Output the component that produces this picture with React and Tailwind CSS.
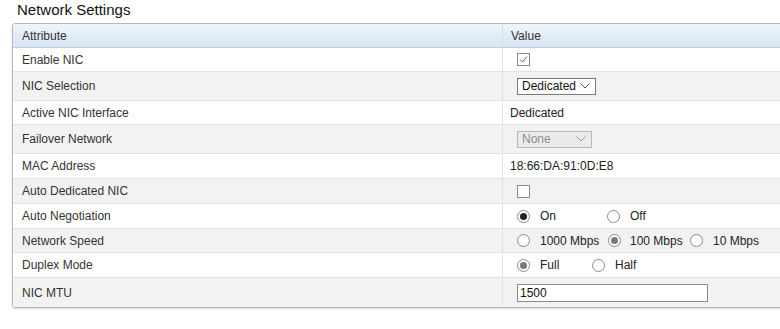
import React from "react";

function Radio({ checked, dim }) {
  return (
    <span className="inline-flex items-center justify-center w-[13px] h-[13px] rounded-full border border-[#8a8a8a] bg-white shrink-0">
      {checked && <span className={"w-[7px] h-[7px] rounded-full " + (dim ? "bg-[#7a7a7a]" : "bg-[#222]")} />}
    </span>
  );
}

function Check({ checked }) {
  return (
    <span className="inline-flex items-center justify-center w-[13px] h-[13px] border border-[#8a8a8a] bg-white">
      {checked && (
        <svg width="9" height="9" viewBox="0 0 9 9" fill="none">
          <path d="M1 4.5 L3.5 7 L8 1.5" stroke="#666" strokeWidth="1" />
        </svg>
      )}
    </span>
  );
}

function Select({ label, disabled, w }) {
  return (
    <span
      className={
        "inline-flex items-center justify-between h-[17px] border pl-[4px] pr-[5px] " +
        w +
        (disabled ? " bg-[#ebebeb] border-[#b8b8b8] text-[#8d8d8d]" : " bg-white border-[#7a7a7a] text-[#111]")
      }
    >
      <span className="text-[12px]">{label}</span>
      <svg width="10" height="6" viewBox="0 0 10 6" fill="none">
        <path d="M0.5 0.5 L5 5 L9.5 0.5" stroke={disabled ? "#9a9a9a" : "#555"} strokeWidth="1" />
      </svg>
    </span>
  );
}

const rows = [
  { name: "Enable NIC", h: "h-[24px]", value: <Check checked /> },
  { name: "NIC Selection", h: "h-[29px]", value: <Select label="Dedicated" w="w-[79px]" /> },
  { name: "Active NIC Interface", h: "h-[24px]", value: <span className="-ml-[7px]">Dedicated</span> },
  { name: "Failover Network", h: "h-[29px]", value: <Select label="None" w="w-[75px]" disabled /> },
  { name: "MAC Address", h: "h-[25px]", value: <span className="-ml-[7px]">18:66:DA:91:0D:E8</span> },
  { name: "Auto Dedicated NIC", h: "h-[25px]", value: <Check /> },
  {
    name: "Auto Negotiation",
    h: "h-[25px]",
    value: (
      <span className="flex items-center">
        <Radio checked />
        <span className="ml-[10px] w-[67px]">On</span>
        <Radio />
        <span className="ml-[10px]">Off</span>
      </span>
    ),
  },
  {
    name: "Network Speed",
    h: "h-[24px]",
    value: (
      <span className="flex items-center">
        <Radio />
        <span className="ml-[10px] w-[68px]">1000 Mbps</span>
        <Radio checked dim />
        <span className="ml-[9px] w-[60px]">100 Mbps</span>
        <Radio />
        <span className="ml-[10px]">10 Mbps</span>
      </span>
    ),
  },
  {
    name: "Duplex Mode",
    h: "h-[25px]",
    value: (
      <span className="flex items-center">
        <Radio checked dim />
        <span className="ml-[10px] w-[52px]">Full</span>
        <Radio />
        <span className="ml-[10px]">Half</span>
      </span>
    ),
  },
  {
    name: "NIC MTU",
    h: "h-[29px]",
    value: (
      <span className="flex items-center w-[191px] h-[18px] border border-[#8a8a8a] bg-white pl-[2px] text-[#111]">1500</span>
    ),
  },
];

export default function App() {
  return (
    <div className="w-[780px] h-[329px] overflow-hidden bg-white text-[#333] font-['Liberation_Sans',Arial,sans-serif]">
      <div className="pl-[17px] pt-[1px] h-[23px] text-[15px] leading-[17px] text-[#111]">Network Settings</div>
      <div className="ml-[12px] w-[800px] border border-[#b9b9b9] rounded-[3px] shadow-[0_1px_2px_rgba(0,0,0,0.15)] text-[12px]">
        <div className="flex h-[24px] items-center bg-gradient-to-b from-[#f0f5fb] to-[#d7e5f4] border-b border-[#c5ccd4] rounded-t-[3px]">
          <div className="w-[490px] pl-[9px] border-r border-[#d6dde6] h-full flex items-center">Attribute</div>
          <div className="pl-[8px]">Value</div>
        </div>
        {rows.map((r, i) => (
          <div
            key={r.name}
            className={
              "flex items-center " +
              r.h +
              (i % 2 === 0 ? " bg-white" : " bg-[#f2f2f2]") +
              (i < rows.length - 1 ? " border-b border-[#e3e3e3]" : "")
            }
          >
            <div className="w-[490px] pl-[9px] border-r border-[#e3e3e3] h-full flex items-center">{r.name}</div>
            <div className="pl-[14px] flex items-center text-[#222]">{r.value}</div>
          </div>
        ))}
      </div>
    </div>
  );
}
